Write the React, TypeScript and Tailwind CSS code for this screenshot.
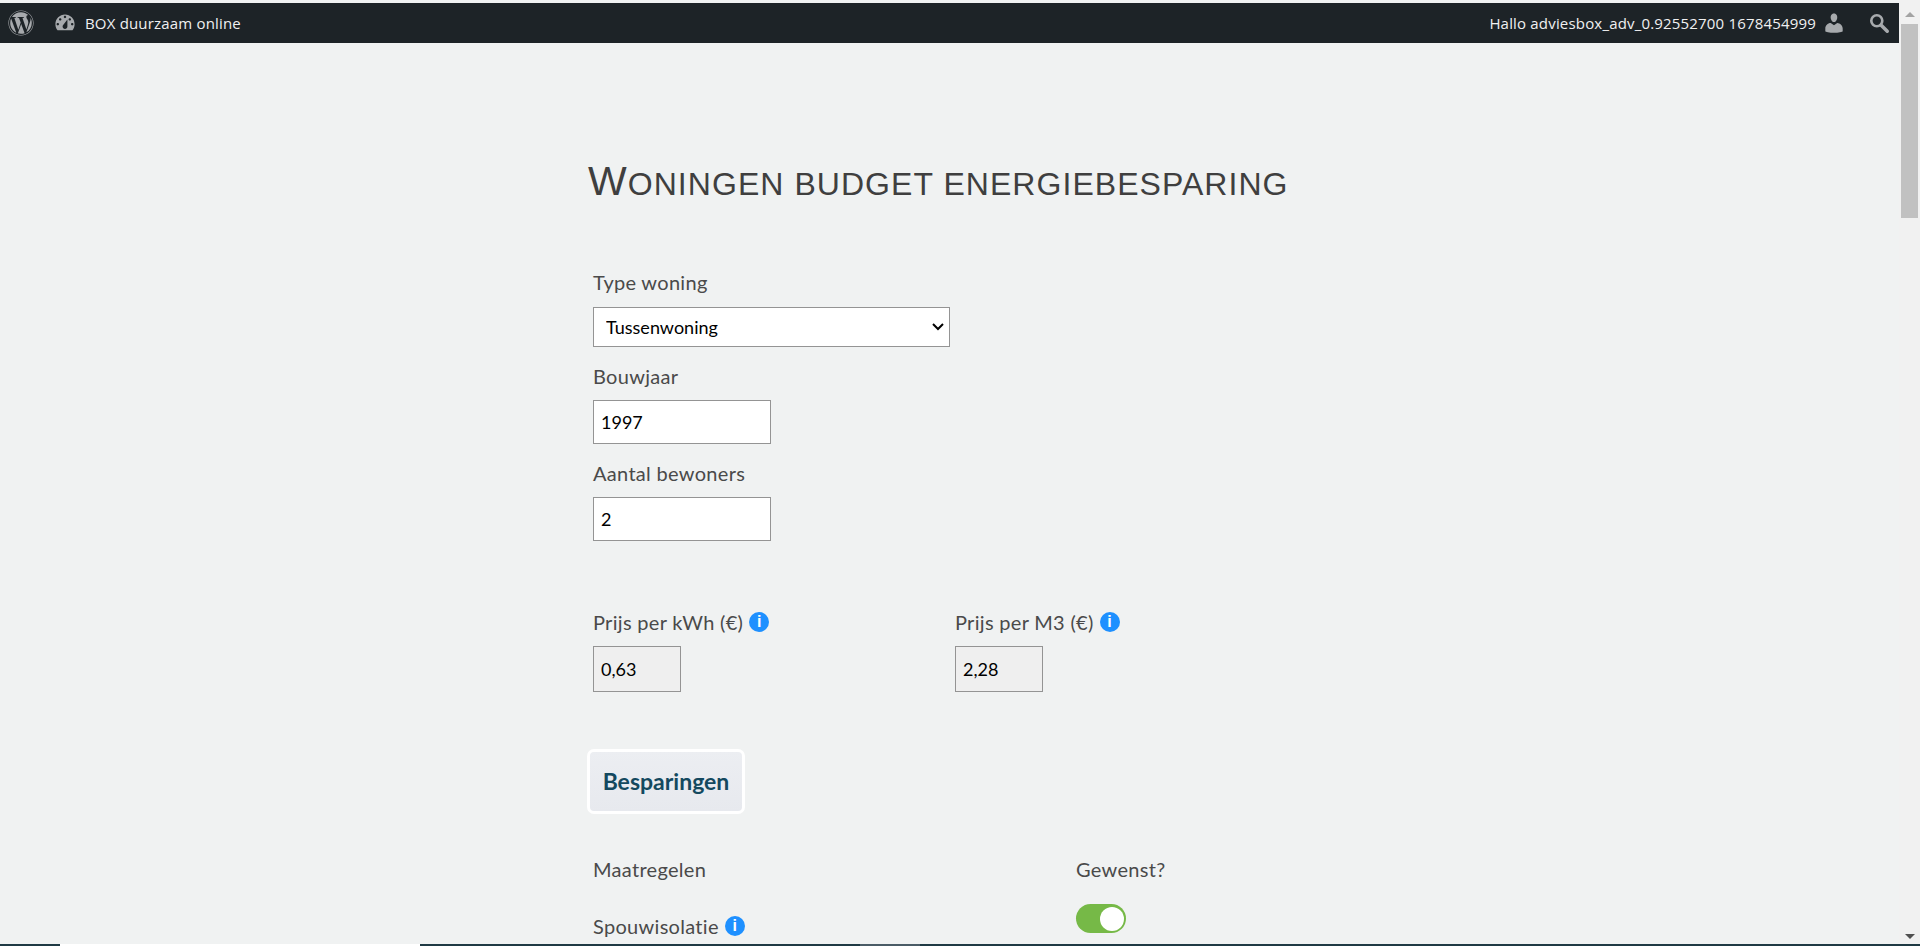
import { FaWordpress } from 'react-icons/fa';

const labelClass = "block font-['Lato',sans-serif] text-[20px] tracking-[0.3px] leading-[24px] text-[#4a4a4a]";
const inputClass = "block h-[44px] w-[178px] border border-[#949494] bg-white px-[7px] font-['Lato',sans-serif] text-[18px] text-black";
const grayInputClass = "block h-[46px] w-[88px] border border-[#949494] bg-[#efefef] px-[7px] font-['Lato',sans-serif] text-[18px] text-black";

function InfoIcon() {
  return (
    <span className="ml-[6px] inline-flex h-[20px] w-[20px] items-center justify-center rounded-full bg-[#1e90ff] font-['Liberation_Sans',sans-serif] text-[16px] font-bold leading-none text-white">
      i
    </span>
  );
}

function AdminBar() {
  return (
    <div className="mt-[3px] flex h-[40px] items-center justify-between bg-[#1d2327] font-['Open_Sans',sans-serif] text-[15px] tracking-[0.18px] text-[#f0f0f1]">
      <div className="flex items-center">
        <FaWordpress className="ml-[8px] text-[26px] text-[#a7aaad]" />
        <svg viewBox="0 0 20 20" className="ml-[19px] h-[24px] w-[24px] fill-[#a7aaad]">
          <path d="M3.76 16h12.48c1.1-1.37 1.76-3.11 1.76-5 0-4.42-3.58-8-8-8s-8 3.58-8 8c0 1.89.66 3.63 1.76 5zM10 4c.55 0 1 .45 1 1s-.45 1-1 1-1-.45-1-1 .45-1 1-1zM6 6c.55 0 1 .45 1 1s-.45 1-1 1-1-.45-1-1 .45-1 1-1zm8 0c.55 0 1 .45 1 1s-.45 1-1 1-1-.45-1-1 .45-1 1-1zm-5.37 5.55L12 7v6c0 1.1-.9 2-2 2s-2-.9-2-2c0-.57.24-1.08.63-1.45zM4 10c.55 0 1 .45 1 1s-.45 1-1 1-1-.45-1-1 .45-1 1-1zm12 0c.55 0 1 .45 1 1s-.45 1-1 1-1-.45-1-1 .45-1 1-1z" />
        </svg>
        <span className="ml-[8px]">BOX duurzaam online</span>
      </div>
      <div className="flex items-center">
        <span>Hallo adviesbox_adv_0.92552700 1678454999</span>
        <svg viewBox="0 0 20 20" className="ml-[6px] h-[24px] w-[24px] fill-[#a7aaad]">
          <path d="M10 9.25c-2.27 0-2.73-3.44-2.73-3.44C7 4.02 7.82 2 9.97 2c2.16 0 2.98 2.02 2.71 3.81 0 0-.41 3.44-2.68 3.44zm0 2.57L12.72 10c2.39 0 4.52 2.33 4.52 4.53v2.49s-3.65 1.13-7.24 1.13c-3.65 0-7.24-1.13-7.24-1.13v-2.49c0-2.25 1.94-4.48 4.47-4.48z" />
        </svg>
        <svg viewBox="0 0 20 20" className="ml-[22px] mr-[9px] h-[22px] w-[22px] fill-none stroke-[#a7aaad]">
          <circle cx="8" cy="8" r="5" strokeWidth="2.4" />
          <path d="M12 12l5.5 5.5" strokeWidth="3.2" strokeLinecap="round" />
        </svg>
      </div>
    </div>
  );
}

function Scrollbar() {
  return (
    <div className="flex w-[21px] shrink-0 flex-col items-center bg-[#f1f1f1]">
      <div className="mt-[12px] h-0 w-0 border-x-[5px] border-b-[5px] border-x-transparent border-b-[#a3a3a3]" />
      <div className="mt-[7px] h-[194px] w-[17px] bg-[#c1c1c1]" />
      <div className="mt-auto mb-[5px] h-0 w-0 border-x-[5px] border-t-[5px] border-x-transparent border-t-[#505050]" />
    </div>
  );
}

export default function App() {
  return (
    <div className="flex h-[946px] w-[1920px] flex-col overflow-hidden bg-[#f0f2f2]">
      <div className="flex min-h-0 flex-1">
        <div className="min-w-0 flex-1">
          <AdminBar />
          <main className="pl-[588px]">
            <h1 className="mt-[116px] h-[44px] whitespace-nowrap font-['Liberation_Sans',sans-serif] text-[32px] uppercase leading-[44px] tracking-[1.05px] text-[#3f3f3f] first-letter:text-[41px]">
              Woningen budget energiebesparing
            </h1>

            <div className="pl-[5px]">
              <label className={`${labelClass} mt-[67px]`}>Type woning</label>
              <div className="relative mt-[13px] w-[357px]">
                <select className="block h-[40px] w-full appearance-none border border-[#949494] bg-white pl-[12px] font-['Lato',sans-serif] text-[18px] text-black" defaultValue="Tussenwoning">
                  <option>Tussenwoning</option>
                </select>
                <svg viewBox="0 0 12 8" className="pointer-events-none absolute right-[6px] top-[16px] h-[8px] w-[12px] fill-none stroke-black stroke-2">
                  <path d="M1 1l5 5 5-5" />
                </svg>
              </div>

              <label className={`${labelClass} mt-[17px]`}>Bouwjaar</label>
              <input className={`${inputClass} mt-[12px]`} defaultValue="1997" />

              <label className={`${labelClass} mt-[17px]`}>Aantal bewoners</label>
              <input className={`${inputClass} mt-[12px]`} defaultValue="2" />

              <div className="mt-[69px] flex">
                <div className="w-[362px]">
                  <label className={`${labelClass} flex items-center`}>
                    Prijs per kWh (€)
                    <InfoIcon />
                  </label>
                  <input className={`${grayInputClass} mt-[12px]`} readOnly value="0,63" />
                </div>
                <div>
                  <label className={`${labelClass} flex items-center`}>
                    Prijs per M3 (€)
                    <InfoIcon />
                  </label>
                  <input className={`${grayInputClass} mt-[12px]`} readOnly value="2,28" />
                </div>
              </div>
            </div>

            <div className="-ml-px mt-[57px] flex h-[65px] w-[158px] items-center justify-center rounded-[7px] border-[3px] border-white bg-linear-to-b from-[#eceef2] to-[#e7e9ee] font-['Lato',sans-serif] text-[23px] font-bold text-[#14495f]">
              Besparingen
            </div>

            <div className="mt-[43px] grid w-[700px] grid-cols-[483px_1fr] pl-[5px]">
              <span className={labelClass}>Maatregelen</span>
              <span className={labelClass}>Gewenst?</span>
              <span className={`${labelClass} mt-[33px] flex items-center`}>
                Spouwisolatie
                <InfoIcon />
              </span>
              <span className="mt-[23px] flex h-[29px] w-[50px] items-center justify-end rounded-full bg-[#76b947] pr-[2px]">
                <span className="h-[24px] w-[24px] rounded-full bg-white" />
              </span>
            </div>
          </main>
        </div>
        <Scrollbar />
      </div>
      <div className="flex h-[2px] shrink-0 bg-[#1f3a44]">
        <div className="ml-[60px] w-[360px] bg-white" />
        <div className="ml-[440px] w-[60px] bg-[#4a5c66]" />
      </div>
    </div>
  );
}
